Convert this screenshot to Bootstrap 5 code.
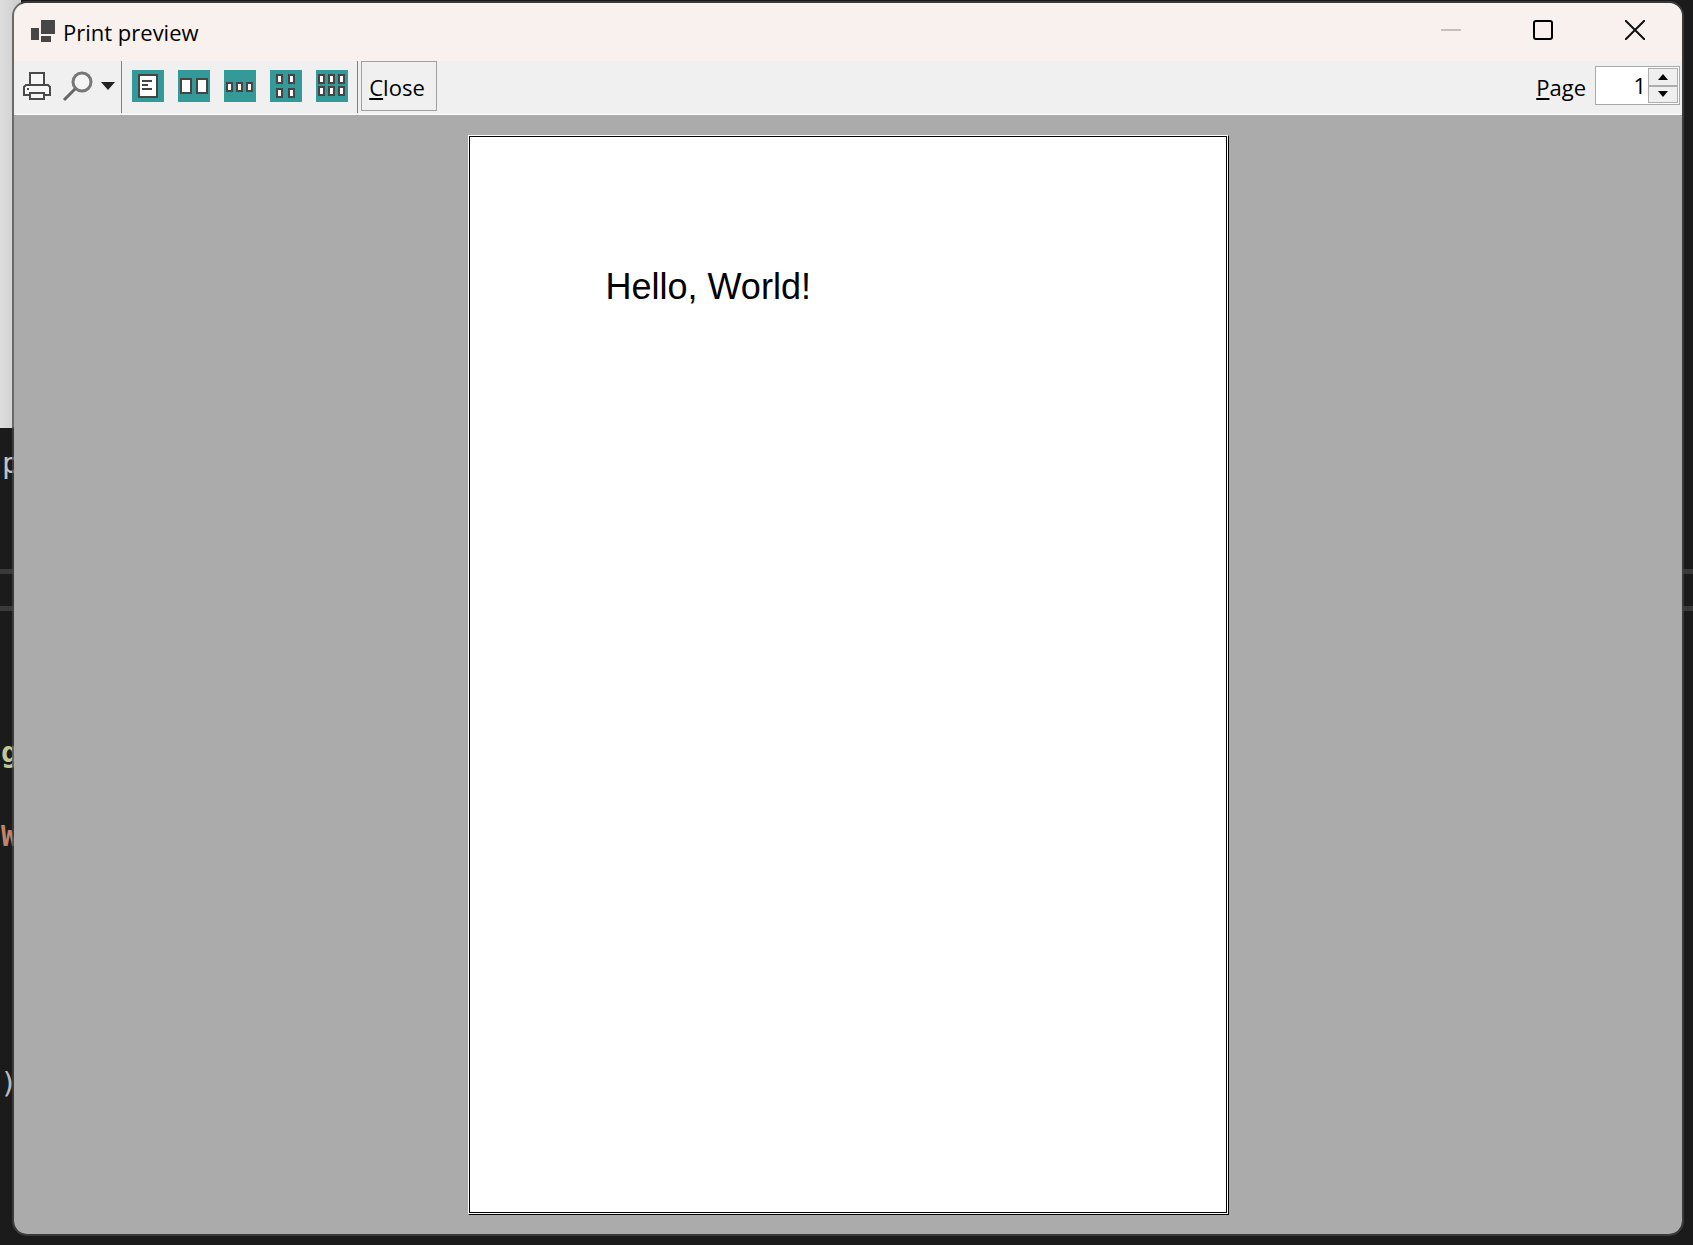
<!DOCTYPE html>
<html lang="en">
<head>
<meta charset="utf-8">
<meta name="viewport" content="width=device-width, initial-scale=1">
<title>Print preview</title>
<link href="https://cdn.jsdelivr.net/npm/bootstrap@5.3.0/dist/css/bootstrap.min.css" rel="stylesheet">
<script src="https://cdn.jsdelivr.net/npm/bootstrap@5.3.0/dist/js/bootstrap.bundle.min.js" defer></script>
<style>
  body { background: #1b1b1b; font-family: "Open Sans", "Noto Sans", sans-serif; font-size: 22px; line-height: 30px; color: #000; }
  .desktop { min-height: 100vh; padding: 1px 9px 9px 12px; }

  /* what lies behind the dialog */
  .behind { position: absolute; inset: 0; }
  .behind > * { position: absolute; }
  .pale-window { left: 0; top: 0; width: 21px; height: 428px; background: linear-gradient(90deg, #dedede, #cbcbcb); border-radius: 0 0 9px 0; }
  .rule { left: 0; right: 0; height: 5px; background: #3a3a3a; }
  .rule-a { top: 569px; }
  .rule-b { top: 606px; }
  .code { font-family: "DejaVu Sans Mono", monospace; font-size: 29px; line-height: 34px; }
  .code-p { left: 2px; top: 446px; color: #c4c4c4; }
  .code-g { left: 1px; top: 735px; color: #c3c795; font-weight: 700; }
  .code-w { left: 1px; top: 819px; color: #c08468; font-weight: 700; }
  .code-b { left: 0; top: 1066px; color: #b8bcc0; }

  .dialog { border: 2px solid rgba(70, 70, 70, .75); border-radius: 15px; background: #ababab; background-clip: padding-box; overflow: hidden; }
  .title-bar { height: 58px; background: #f9f1ed; padding: 0 1px 0 17px; }
  .title-text { padding: 2px 0 0 8px; }
  .plain { border: 0; padding: 0; background: transparent; color: inherit; }
  .caption-btn { width: 92px; height: 54px; display: grid; place-items: center; }
  .tools { height: 54px; background: #f0f0f0; border-bottom: 1px solid #fff; padding-right: 2px; }
  .tool-btn { width: 46px; height: 50px; display: grid; place-items: center; }
  .print-btn { width: 45px; }
  .zoom-btn { width: 62px; height: 50px; padding: 0 6px 0 3px; }
  .divider { width: 1px; height: 52px; background: #808080; margin: 0 3px 0 2px; }
  .divider.first { margin-left: 0; }
  .close-btn { width: 76px; height: 50px; border: 1px solid #a0a0a0; background: #f0f0f0; padding: 2px 4px 0 0; }
  .page-label { padding: 11px 9px 0 0; }
  .spinner-box { width: 85px; height: 39px; margin-top: 5px; border: 1px solid #a8a8a8; background: #fff; padding: 1px; }
  .spinner-box input { width: 51px; border: 0; padding: 0 2px 2px 0; text-align: right; background: transparent; appearance: textfield; outline: 0; }
  .spinner-box input::-webkit-inner-spin-button { appearance: none; }
  .step { width: 30px; flex: 1; border: 1px solid #adadad; background: #efefef; padding: 0; display: grid; place-items: center; }
  .canvas { padding: 20px 20px 19px; }
  .sheet { width: 100%; max-width: 761px; background: #fff; border: 1px solid #000; border-color: #fff #000 #000 #fff; padding: 0 1px 1px 0; }
  .sheet-body { border: 1px solid #000; padding: 129px 136px; font: 36px/42px "Liberation Sans", Arial, sans-serif; }
</style>
</head>
<body>
<div class="behind overflow-hidden" aria-hidden="true">
  <div class="pale-window"></div>
  <div class="rule rule-a"></div>
  <div class="rule rule-b"></div>
  <span class="code code-p">p</span>
  <span class="code code-g">g</span>
  <span class="code code-w">W</span>
  <span class="code code-b">)</span>
</div>

<div class="desktop d-flex flex-column position-relative">
  <main class="dialog d-flex flex-column flex-grow-1">
    <header class="title-bar d-flex align-items-start">
      <div class="d-flex align-items-center flex-grow-1 pt-3">
        <svg width="24" height="22" viewBox="0 0 24 22" fill="#464646" aria-hidden="true"><rect x="0" y="8" width="8" height="12"/><rect x="10" y="0" width="14" height="14"/><rect x="10" y="16" width="10" height="6"/></svg>
        <span class="title-text lh-1">Print preview</span>
      </div>
      <button class="plain caption-btn" disabled aria-label="Minimize"><svg width="20" height="20"><path d="M0 10H20" stroke="#c5bfbd" stroke-width="2"/></svg></button>
      <button class="plain caption-btn" aria-label="Maximize"><svg width="20" height="20" fill="none" stroke="#000" stroke-width="2"><rect x="1" y="1" width="18" height="18" rx="2"/></svg></button>
      <button class="plain caption-btn" aria-label="Close window"><svg width="20" height="20"><path d="M0 0L20 20M20 0L0 20" stroke="#111" stroke-width="2"/></svg></button>
    </header>

    <div class="tools d-flex align-items-start" role="toolbar" aria-label="Preview tools">
      <button class="plain tool-btn print-btn" aria-label="Print">
        <svg width="30" height="30" viewBox="0 0 30 30" fill="#f7f7f7" stroke="#4a4a4a" stroke-width="2"><path d="M8 14V2H22V14"/><path d="M7 24H2V16L4 14H26L28 16V24H23"/><rect x="8" y="22" width="14" height="6"/><rect x="5" y="17" width="2" height="2" fill="#4a4a4a" stroke="none"/></svg>
      </button>
      <button class="plain zoom-btn d-flex align-items-center justify-content-between" aria-label="Zoom">
        <svg width="32" height="32" viewBox="0 0 32 32" fill="none"><circle cx="20" cy="12" r="9" fill="#f5f5f5" stroke="#777" stroke-width="3"/><path d="M13 19L2 30" stroke="#666" stroke-width="3"/></svg>
        <svg width="14" height="8" viewBox="0 0 14 8" fill="#222"><path d="M0 0H14L7 8Z"/></svg>
      </button>
      <div class="divider first"></div>
      <button class="plain tool-btn" aria-label="One page">
        <svg width="32" height="32"><path fill="#339999" d="M0 0h32v32H0z"/><rect x="7" y="5" width="18" height="22" fill="#fff" stroke="#444" stroke-width="2"/><path d="M10 11h10M10 15h6M10 19h10" stroke="#444" stroke-width="2"/></svg>
      </button>
      <button class="plain tool-btn" aria-label="Two pages">
        <svg width="32" height="32" fill="#fff" stroke="#444" stroke-width="2"><path fill="#339999" stroke="none" d="M0 0h32v32H0z"/><rect x="3" y="9" width="10" height="14"/><rect x="19" y="9" width="10" height="14"/></svg>
      </button>
      <button class="plain tool-btn" aria-label="Three pages">
        <svg width="32" height="32" fill="#fff" stroke="#444" stroke-width="2"><path fill="#339999" stroke="none" d="M0 0h32v32H0z"/><path d="M3 13h5v8H3zM13 13h5v8h-5zM23 13h5v8h-5z"/></svg>
      </button>
      <button class="plain tool-btn" aria-label="Four pages">
        <svg width="32" height="32" fill="#fff" stroke="#444" stroke-width="2"><path fill="#339999" stroke="none" d="M0 0h32v32H0z"/><path d="M7 5h5v8H7zM19 5h5v8h-5zM7 19h5v8H7zM19 19h5v8h-5z"/></svg>
      </button>
      <button class="plain tool-btn" aria-label="Six pages">
        <svg width="32" height="32" fill="#fff" stroke="#444" stroke-width="2"><path fill="#339999" stroke="none" d="M0 0h32v32H0z"/><path d="M3 5h5v8H3zM13 5h5v8h-5zM23 5h5v8h-5zM3 17h5v8H3zM13 17h5v8h-5zM23 17h5v8h-5z"/></svg>
      </button>
      <div class="divider"></div>
      <button class="close-btn"><u>C</u>lose</button>

      <label class="page-label ms-auto" for="page-number"><u>P</u>age</label>
      <div class="spinner-box d-flex">
        <input id="page-number" type="number" min="1" value="1">
        <div class="d-flex flex-column">
          <button class="step" aria-label="Next page"><svg width="10" height="6"><path d="M0 6L5 0L10 6Z"/></svg></button>
          <button class="step" aria-label="Previous page"><svg width="10" height="6"><path d="M0 0L5 6L10 0Z"/></svg></button>
        </div>
      </div>
    </div>

    <section class="canvas d-flex justify-content-center flex-grow-1">
      <div class="sheet d-flex">
        <div class="sheet-body flex-grow-1">Hello, World!</div>
      </div>
    </section>
  </main>
</div>
</body>
</html>
